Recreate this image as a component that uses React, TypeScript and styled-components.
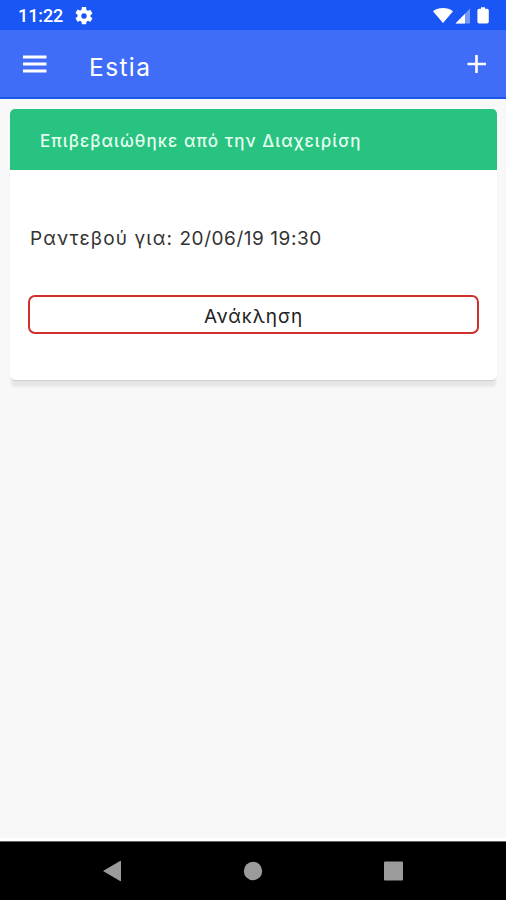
import React from "react";
import styled, { createGlobalStyle } from "styled-components";

const GlobalStyle = createGlobalStyle`
  * { box-sizing: border-box; }
  body { margin: 0; background: #f8f8f8; }
`;

const Screen = styled.div`
  width: 100%;
  height: 900px;
  display: flex;
  flex-direction: column;
  background: #f8f8f8;
  font-family: Inter, "Noto Sans", sans-serif;
  overflow: hidden;
`;

const StatusBar = styled.header`
  height: 30px;
  flex: none;
  display: flex;
  align-items: center;
  padding: 2px 15px 0 18px;
  background: #1a55f5;
  color: #fff;
`;

const Clock = styled.span`
  width: 57px;
  font: 500 18px/24px Roboto, sans-serif;
  letter-spacing: -0.1px;
`;

const StatusIcons = styled.div`
  display: flex;
  align-items: center;
  margin-left: auto;
`;

const Icon = styled.svg`
  display: block;
  flex: none;
`;

const AppBar = styled.div`
  height: 69px;
  flex: none;
  display: flex;
  align-items: center;
  padding: 0 20px 0 23px;
  background: #3f6df7;
  border-bottom: 2px solid #1a55e6;
  color: #fff;
`;

const IconButton = styled.button`
  display: flex;
  padding: 0;
  border: 0;
  background: none;
  color: inherit;
`;

const Title = styled.h1`
  flex: 1;
  margin: 6px 0 0 42px;
  font-size: 24.5px;
  line-height: 30px;
  font-weight: 400;
  letter-spacing: 1.4px;
`;

const Content = styled.main`
  flex: 1;
  padding: 10px 9px 0 10px;
`;

const Card = styled.article`
  height: 271px;
  background: #fff;
  border-radius: 5px;
  overflow: hidden;
  box-shadow: 0 2px 1px -1px rgba(0, 0, 0, 0.1), 0 8px 3px -1px rgba(0, 0, 0, 0.07);
`;

const CardHeader = styled.div`
  height: 61px;
  padding: 20px 30px 0;
  background: #28c281;
  color: #e4fff0;
  font-size: 17px;
  line-height: 24px;
  font-weight: 500;
  letter-spacing: 1.05px;
  white-space: nowrap;
`;

const CardBody = styled.div`
  padding: 56px 18px 0;
`;

const Appointment = styled.p`
  margin: 0 0 44px 2px;
  color: #333;
  font-size: 19px;
  line-height: 25px;
  letter-spacing: 0.55px;
  white-space: nowrap;
`;

const AppointmentLabel = styled.span`
  letter-spacing: 1.12px;
`;

const RevokeButton = styled.button`
  width: 100%;
  height: 39px;
  padding: 4px 0 0;
  border: 2px solid #d0302c;
  border-radius: 7px;
  background: #fff;
  color: #222;
  font: 400 19px/24px Inter, "Noto Sans", sans-serif;
  letter-spacing: 0.9px;
`;

const NavBar = styled.nav`
  height: 59px;
  flex: none;
  display: flex;
  align-items: center;
  justify-content: space-between;
  padding: 0 102px;
  border-top: 1px solid #666;
  background: #000;
  box-shadow: 0 -3px 0 #fff;
`;

export default function App() {
  return (
    <>
      <GlobalStyle />
      <Screen>
        <StatusBar>
          <Clock>11:22</Clock>
          <Icon width="18" height="18" viewBox="2 2 20 20" fill="#fff">
            <path d="M19.14 12.94c.04-.3.06-.61.06-.94s-.02-.64-.07-.94l2.03-1.58a.49.49 0 0 0 .12-.61l-1.92-3.32a.49.49 0 0 0-.59-.22l-2.39.96c-.5-.38-1.03-.7-1.62-.94l-.36-2.54A.48.48 0 0 0 13.92 2h-3.84c-.24 0-.43.17-.47.41l-.36 2.54c-.59.24-1.13.57-1.62.94l-2.39-.96a.48.48 0 0 0-.59.22L2.74 8.47a.48.48 0 0 0 .12.61l2.03 1.58c-.05.3-.09.63-.09.94s.02.64.07.94l-2.03 1.58a.49.49 0 0 0-.12.61l1.92 3.32c.12.22.37.29.59.22l2.39-.96c.5.38 1.03.7 1.62.94l.36 2.54c.05.24.24.41.48.41h3.84c.24 0 .44-.17.47-.41l.36-2.54c.59-.24 1.13-.56 1.62-.94l2.39.96c.22.08.47 0 .59-.22l1.92-3.32a.48.48 0 0 0-.12-.61zM12 15a3 3 0 1 1 0-6 3 3 0 0 1 0 6z" />
          </Icon>
          <StatusIcons>
            <Icon width="58" height="18" viewBox="0 0 58 18" fill="#fff">
              <path d="M0 4.2C5.5-.1 14.5-.1 20 4.2L10 16z" />
              <path d="M22.5 16.5H37V1.5z" opacity=".4" />
              <path d="M22.5 16.5H32V6.7z" />
              <path d="M48 1.7V.2h4v1.5h2q1.8 0 1.8 1.8v11.3q0 1.8-1.8 1.8h-7.8q-1.8 0-1.8-1.8V3.5q0-1.8 1.8-1.8z" />
            </Icon>
          </StatusIcons>
        </StatusBar>
        <AppBar>
          <IconButton aria-label="Menu">
            <Icon width="24" height="18" viewBox="0 0 24 18" fill="#fff">
              <path d="M0 .5h23.5v3H0zM0 7.5h23.5v3H0zM0 14.5h23.5v3H0z" />
            </Icon>
          </IconButton>
          <Title>Estia</Title>
          <IconButton aria-label="Add">
            <Icon width="19" height="18" viewBox="0 0 19 18" fill="#fff">
              <path d="M8.2 0h2.6v7.7H19v2.6h-8.2V18H8.2v-7.7H.5V7.7h7.7z" />
            </Icon>
          </IconButton>
        </AppBar>
        <Content>
          <Card>
            <CardHeader>Επιβεβαιώθηκε από την Διαχειρίση</CardHeader>
            <CardBody>
              <Appointment>
                <AppointmentLabel>Ραντεβού για: </AppointmentLabel>
                20/06/19 19:30
              </Appointment>
              <RevokeButton>Ανάκληση</RevokeButton>
            </CardBody>
          </Card>
        </Content>
        <NavBar>
          <Icon width="20" height="22" viewBox="0 0 20 22" fill="#9b9b9b">
            <path d="M1 11 18 1q1-.5 1 .6v18.8q0 1.1-1 .6z" />
          </Icon>
          <Icon width="20" height="20" viewBox="0 0 20 20" fill="#9b9b9b">
            <circle cx="10" cy="10" r="9.2" />
          </Icon>
          <Icon width="20" height="20" viewBox="0 0 20 20" fill="#9b9b9b">
            <rect x="0" y=".5" width="19" height="19" rx="1" />
          </Icon>
        </NavBar>
      </Screen>
    </>
  );
}
